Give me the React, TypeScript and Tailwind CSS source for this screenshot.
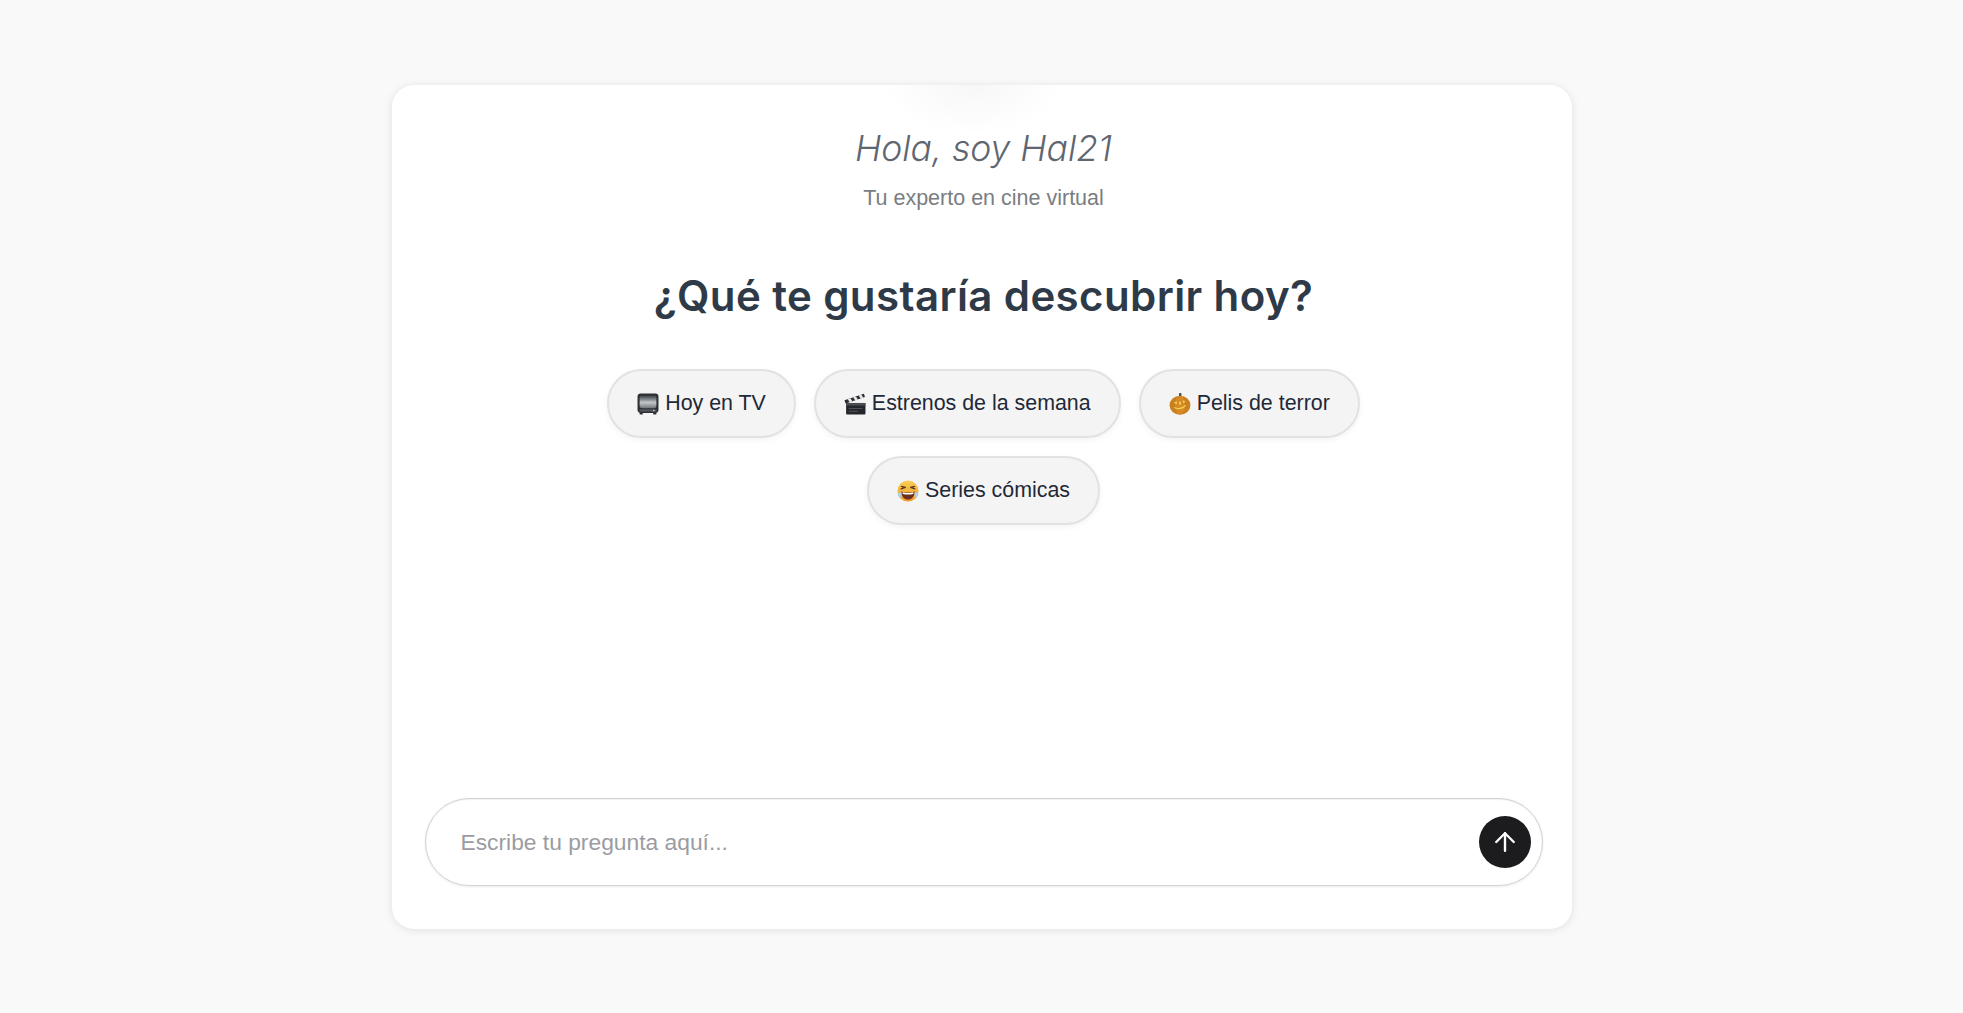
import { ArrowUp } from "lucide-react";
import type { ReactNode } from "react";

function TvEmoji() {
  return (
    <svg width="22" height="22" viewBox="1 0.5 20 21" className="shrink-0">
      <defs>
        <linearGradient id="tv-screen" x1="0" y1="0" x2="0" y2="1">
          <stop offset="0" stopColor="#3b4045" />
          <stop offset="0.55" stopColor="#c3c6c8" />
          <stop offset="1" stopColor="#70757a" />
        </linearGradient>
      </defs>
      <rect x="1" y="1" width="20" height="18.5" rx="3" fill="#2d3034" />
      <rect x="3" y="3" width="16" height="12" rx="2" fill="url(#tv-screen)" />
      <rect x="3" y="16.2" width="16" height="2" fill="#55595e" />
      <circle cx="16.5" cy="17.2" r="0.8" fill="#c9ccce" />
      <rect x="3" y="19.5" width="3" height="1.5" fill="#2d3034" />
      <rect x="16" y="19.5" width="3" height="1.5" fill="#2d3034" />
    </svg>
  );
}

function ClapperEmoji() {
  return (
    <svg width="22" height="22" viewBox="0.5 0.5 21 21" className="shrink-0">
      <rect x="2.5" y="10" width="18.5" height="11" rx="1" fill="#23262b" />
      <rect x="2.5" y="10" width="18.5" height="2.5" fill="#4a4e54" />
      <rect x="5" y="15" width="13" height="0.8" fill="#5a5e64" />
      <rect x="5" y="17.5" width="9" height="0.8" fill="#5a5e64" />
      <path d="M1 7.5 19.5 1.2l1 3L2 10.500z" fill="#2a2d32" />
      <path d="M4 6.500 6 9.300l2.600-.9-2-2.800zM9.200 4.700l2 2.800 2.600-.9-2-2.800zM14.400 3l2 2.800 2.600-.9-2-2.800z" fill="#e8e9ea" />
    </svg>
  );
}

function PumpkinEmoji() {
  return (
    <svg width="22" height="22" viewBox="0.5 0.5 21 21.500" className="shrink-0">
      <rect x="10" y="0.5" width="2.400" height="3.500" rx="0.8" fill="#4b4f3c" />
      <ellipse cx="11" cy="12.500" rx="10.200" ry="9.200" fill="#c9801f" />
      <ellipse cx="11" cy="12.500" rx="5" ry="9" fill="#d58a24" />
      <path d="M5 9.500l3.200-.8-.6 3zM13.500 7.500l3 1-2.400 2z" fill="#f4cf56" />
      <path d="M4.800 14.200c2 3 9.500 3.600 12.600-2.200-1 .4-1.600.6-2.200.6l-.6 1.200-1.200-.4-.8 1.200-1.400-.2-.8.9-1.400-.4-.8.3-1-.5z" fill="#f4cf56" />
      <rect x="10" y="9" width="1.800" height="3" fill="#f4cf56" />
    </svg>
  );
}

function LaughEmoji() {
  return (
    <svg width="22" height="22" viewBox="0.5 0.5 21 21" className="shrink-0">
      <defs>
        <linearGradient id="laugh-face" x1="0" y1="0" x2="0" y2="1">
          <stop offset="0" stopColor="#f8cf57" />
          <stop offset="1" stopColor="#ef9a2c" />
        </linearGradient>
      </defs>
      <circle cx="11" cy="11" r="10" fill="url(#laugh-face)" />
      <path d="M4.500 9 8.500 7.500M4.800 6.600 8.500 7.500M17.500 9l-4-1.500M17.200 6.600l-3.700.9" stroke="#5d3a1a" strokeWidth="1.200" strokeLinecap="round" fill="none" />
      <path d="M4.500 11.500c4 1.400 9 1.400 13 0-.3 5-3 7.700-6.500 7.700s-6.200-2.700-6.500-7.700z" fill="#6b2f1d" />
      <path d="M5.600 12.200c3.500 .9 7.300 .9 10.800 0l-.4 1.600c-3.300 .7-6.700 .7-10 0z" fill="#fff" />
      <path d="M1 13.500c1.300-1 2.800-1.200 3.800-.9 .3 2-.3 4-1.400 5.400-1.300-1-2.400-2.500-2.400-4.500zM21 13.500c-1.300-1-2.800-1.200-3.800-.9-.3 2 .3 4 1.400 5.400 1.300-1 2.400-2.500 2.400-4.500z" fill="#b4cfe0" />
    </svg>
  );
}

function Chip({ icon, label }: { icon: ReactNode; label: string }) {
  return (
    <button className="flex h-[69px] items-center gap-[6px] rounded-full border-2 border-[#e2e2e2] bg-[#f4f4f4] px-[28px] text-[21.400px] text-[#1f2937] shadow-[0_2px_6px_rgba(0,0,0,0.05)]">
      {icon}
      <span>{label}</span>
    </button>
  );
}

export default function App() {
  return (
    <div className="flex min-h-[1013px] justify-center bg-[#f9f9f9] pt-[85px] font-['Liberation_Sans',sans-serif]">
      <div className="relative flex h-[844px] w-[1180px] flex-col overflow-hidden rounded-[22px] bg-white pb-[43px] pl-[33px] pr-[29px] shadow-[0_1px_8px_rgba(0,0,0,0.1)]">
        {/* Faint glow under the top edge */}
        <div className="absolute left-[491px] top-[-50px] h-[100px] w-[180px] rounded-full bg-[radial-gradient(closest-side,rgba(0,0,0,0.03),rgba(0,0,0,0))]" />

        {/* Header */}
        <div className="flex flex-col items-center pt-[40px]">
          <h1 className="font-['Inter',sans-serif] text-[35.500px] font-light italic leading-[48px] text-[#5f6670]">
            Hola, soy Hal21
          </h1>
          <p className="mt-[12px] text-[21.500px] leading-[26px] text-[#7a7d82]">
            Tu experto en cine virtual
          </p>
        </div>

        {/* Suggestions */}
        <div className="flex flex-1 flex-col items-center pt-[57px]">
          <h2 className="font-['Inter',sans-serif] text-[42px] font-semibold leading-[56px] tracking-[0.4px] text-[#2f3a48]">
            ¿Qué te gustaría descubrir hoy?
          </h2>
          <div className="mt-[45px] flex w-[800px] flex-wrap justify-center gap-[18px]">
            <Chip icon={<TvEmoji />} label="Hoy en TV" />
            <Chip icon={<ClapperEmoji />} label="Estrenos de la semana" />
            <Chip icon={<PumpkinEmoji />} label="Pelis de terror" />
            <Chip icon={<LaughEmoji />} label="Series cómicas" />
          </div>
        </div>

        {/* Input */}
        <div className="flex h-[88px] items-center justify-between rounded-full border border-[#d2d2d2] bg-white pl-[35px] pr-[11px] shadow-[inset_0_1px_1px_rgba(0,0,0,0.06),0_1px_3px_rgba(0,0,0,0.08)]">
          <span className="text-[22.800px] text-[#9a9ca1]">Escribe tu pregunta aquí...</span>
          <button className="flex h-[52px] w-[52px] items-center justify-center rounded-full bg-[#1c1c1e] text-white">
            <ArrowUp size={30} strokeWidth={1.9} />
          </button>
        </div>
      </div>
    </div>
  );
}
